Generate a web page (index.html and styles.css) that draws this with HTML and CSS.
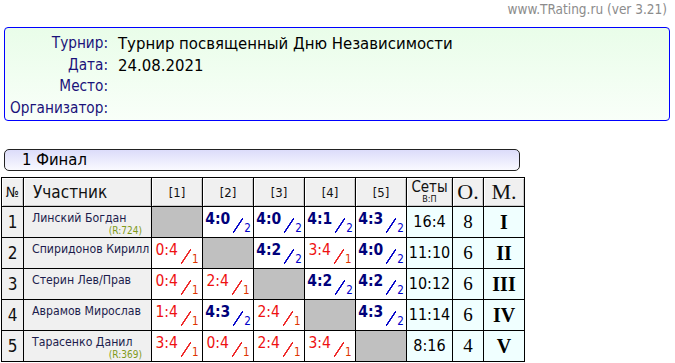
FILE: index.html
```html
<!DOCTYPE html>
<html lang="ru">
<head>
<meta charset="utf-8">
<title>TRating</title>
<link rel="stylesheet" href="styles.css">
</head>
<body>
<div class="top">www.TRating.ru (ver 3.21)</div>
<div class="info">
  <div class="lbl">Турнир:</div><div class="val">Турнир посвященный Дню Независимости</div>
  <div class="lbl">Дата:</div><div class="val">24.08.2021</div>
  <div class="lbl">Место:</div><div class="val"></div>
  <div class="lbl">Организатор:</div><div class="val"></div>
</div>
<div class="stage">1 Финал</div>
<table class="grid">
  <colgroup>
    <col class="c-n"><col class="c-name"><col class="c-g"><col class="c-g"><col class="c-g"><col class="c-g"><col class="c-g"><col class="c-s"><col class="c-o"><col class="c-m">
  </colgroup>
  <tr class="head">
    <th class="h-n">№</th>
    <th class="h-name">Участник</th>
    <th>[1]</th><th>[2]</th><th>[3]</th><th>[4]</th><th>[5]</th>
    <th class="h-sets">Сеты<span>В:П</span></th>
    <th class="h-big">О.</th>
    <th class="h-big">М.</th>
  </tr>
  <tr>
    <td class="num">1</td>
    <td class="name">Линский Богдан<span class="rt">(R:724)</span></td>
    <td class="x"></td>
    <td class="g"><span class="sc w"><b>4:0</b><i>/</i><sub>2</sub></span></td>
    <td class="g"><span class="sc w"><b>4:0</b><i>/</i><sub>2</sub></span></td>
    <td class="g"><span class="sc w"><b>4:1</b><i>/</i><sub>2</sub></span></td>
    <td class="g"><span class="sc w"><b>4:3</b><i>/</i><sub>2</sub></span></td>
    <td class="sets">16:4</td><td class="pts">8</td><td class="pl">I</td>
  </tr>
  <tr>
    <td class="num">2</td>
    <td class="name">Спиридонов Кирилл</td>
    <td class="g"><span class="sc l"><b>0:4</b><i>/</i><sub>1</sub></span></td>
    <td class="x"></td>
    <td class="g"><span class="sc w"><b>4:2</b><i>/</i><sub>2</sub></span></td>
    <td class="g"><span class="sc l"><b>3:4</b><i>/</i><sub>1</sub></span></td>
    <td class="g"><span class="sc w"><b>4:0</b><i>/</i><sub>2</sub></span></td>
    <td class="sets">11:10</td><td class="pts">6</td><td class="pl">II</td>
  </tr>
  <tr>
    <td class="num">3</td>
    <td class="name">Стерин Лев/Прав</td>
    <td class="g"><span class="sc l"><b>0:4</b><i>/</i><sub>1</sub></span></td>
    <td class="g"><span class="sc l"><b>2:4</b><i>/</i><sub>1</sub></span></td>
    <td class="x"></td>
    <td class="g"><span class="sc w"><b>4:2</b><i>/</i><sub>2</sub></span></td>
    <td class="g"><span class="sc w"><b>4:2</b><i>/</i><sub>2</sub></span></td>
    <td class="sets">10:12</td><td class="pts">6</td><td class="pl">III</td>
  </tr>
  <tr>
    <td class="num">4</td>
    <td class="name">Аврамов Мирослав</td>
    <td class="g"><span class="sc l"><b>1:4</b><i>/</i><sub>1</sub></span></td>
    <td class="g"><span class="sc w"><b>4:3</b><i>/</i><sub>2</sub></span></td>
    <td class="g"><span class="sc l"><b>2:4</b><i>/</i><sub>1</sub></span></td>
    <td class="x"></td>
    <td class="g"><span class="sc w"><b>4:3</b><i>/</i><sub>2</sub></span></td>
    <td class="sets">11:14</td><td class="pts">6</td><td class="pl">IV</td>
  </tr>
  <tr>
    <td class="num">5</td>
    <td class="name">Тарасенко Данил<span class="rt">(R:369)</span></td>
    <td class="g"><span class="sc l"><b>3:4</b><i>/</i><sub>1</sub></span></td>
    <td class="g"><span class="sc l"><b>0:4</b><i>/</i><sub>1</sub></span></td>
    <td class="g"><span class="sc l"><b>2:4</b><i>/</i><sub>1</sub></span></td>
    <td class="g"><span class="sc l"><b>3:4</b><i>/</i><sub>1</sub></span></td>
    <td class="x"></td>
    <td class="sets">8:16</td><td class="pts">4</td><td class="pl">V</td>
  </tr>
</table>
</body>
</html>
```
FILE: styles.css
```css
html, body {
  margin: 0;
  padding: 0;
  background: #fff;
}
body {
  font-family: "DejaVu Sans Condensed", "DejaVu Sans", "Liberation Sans", sans-serif;
  font-stretch: condensed;
  color: #000;
}
.top {
  height: 20px;
  padding: 2px 8px 0 0;
  box-sizing: border-box;
  text-align: right;
  font-size: 13.5px;
  line-height: 15px;
  color: #8c8c8c;
}
.info {
  margin: 7px 5px 0 4px;
  height: 94px;
  box-sizing: border-box;
  border: 1px solid #0000ff;
  border-radius: 4px;
  background: linear-gradient(to bottom, #e9fde9, #f9fff9);
  display: grid;
  grid-template-columns: 103px 1fr;
  grid-auto-rows: 21.5px;
  column-gap: 10px;
  padding-top: 5px;
}
.lbl {
  text-align: right;
  font-size: 15.2px;
  color: #1a127a;
  line-height: 21px;
  white-space: nowrap;
}
.val {
  font-size: 16.6px;
  line-height: 21px;
  color: #000;
}
.stage {
  margin: 28px 0 0 4px;
  width: 516px;
  height: 22px;
  box-sizing: border-box;
  border: 1px solid #222;
  border-radius: 5px;
  background: linear-gradient(to bottom, #dcdcfa, #fafaff);
  font-size: 16.5px;
  line-height: 20px;
  padding-left: 17px;
}
.grid {
  margin: 6px 0 0 1px;
  border-collapse: collapse;
  table-layout: fixed;
  width: 522px;
}
.c-n { width: 22px; }
.c-name { width: 128px; }
.c-g { width: 51px; }
.c-s { width: 46px; }
.c-o { width: 31px; }
.c-m { width: 41px; }
.grid th, .grid td {
  border: 1px solid #000;
  padding: 0;
  box-sizing: border-box;
}
.head th {
  height: 29px;
  background: #f0f0f0;
  box-shadow: inset 1px 1px 0 #fff, inset -1px -1px 0 #c8c8c8;
  font-weight: normal;
  font-size: 13px;
  line-height: 15px;
  color: #111;
  vertical-align: middle;
}
.head .h-n { font-size: 14px; }
.head .h-name {
  text-align: left;
  padding-left: 9px;
  font-size: 17px;
  line-height: 20px;
}
.head .h-sets {
  font-size: 15px;
  line-height: 16px;
  vertical-align: top;
  padding-top: 1px;
}
.h-sets span {
  display: block;
  font-size: 9px;
  line-height: 9px;
}
.head .h-big {
  font-family: "Liberation Serif", "Times New Roman", serif;
  font-size: 22px;
  line-height: 24px;
}
.grid td {
  height: 31px;
  overflow: hidden;
}
.num {
  background: #f0f0f0;
  text-align: center;
  font-size: 17px;
  line-height: 20px;
  color: #111;
}
.name {
  background: #f0f0f0;
  vertical-align: top;
  padding: 4px 0 0 8px !important;
  font-size: 12.2px;
  line-height: 15px;
  color: #1c1c4c;
  white-space: nowrap;
}
.rt {
  display: block;
  text-align: right;
  padding-right: 9px;
  font-size: 10px;
  line-height: 10px;
  color: #7f9a1a;
}
.x { background: #c0c0c0; }
.g {
  background: #fff;
  text-align: center;
  vertical-align: top;
}
.sc {
  display: inline-flex;
  align-items: flex-start;
  padding-top: 4px;
  height: 26px;
  box-sizing: border-box;
  white-space: nowrap;
}
.sc b {
  font-size: 15.5px;
  line-height: 16px;
}
.sc i {
  display: inline-block;
  width: 10px;
  height: 15px;
  margin: 7px 1px 0 3px;
  font-style: normal;
  font-size: 12px;
  line-height: 15px;
  color: transparent;
  overflow: hidden;
  background: linear-gradient(to bottom right,
    transparent calc(50% - 0.95px),
    var(--sl) calc(50% - 0.55px),
    var(--sl) calc(50% + 0.55px),
    transparent calc(50% + 0.95px));
}
.sc sub {
  font-size: 11.5px;
  line-height: 11px;
  margin-top: 12px;
  vertical-align: baseline;
}
.w { --sl: #0000c8; }
.l { --sl: #ee2222; }
.w b { color: #00007a; font-weight: bold; }
.w sub { color: #0000c8; }
.l b { color: #ee1111; font-weight: normal; }
.l sub { color: #dd3300; }
.sets {
  background: #f0ffff;
  text-align: center;
  font-size: 16px;
  line-height: 20px;
}
.pts {
  background: #f0ffff;
  text-align: center;
  font-family: "Liberation Serif", "Times New Roman", serif;
  font-size: 19px;
  line-height: 20px;
}
.pl {
  background: #f0ffff;
  text-align: center;
  font-family: "Liberation Serif", "Times New Roman", serif;
  font-weight: bold;
  font-size: 20px;
  line-height: 20px;
}
```
